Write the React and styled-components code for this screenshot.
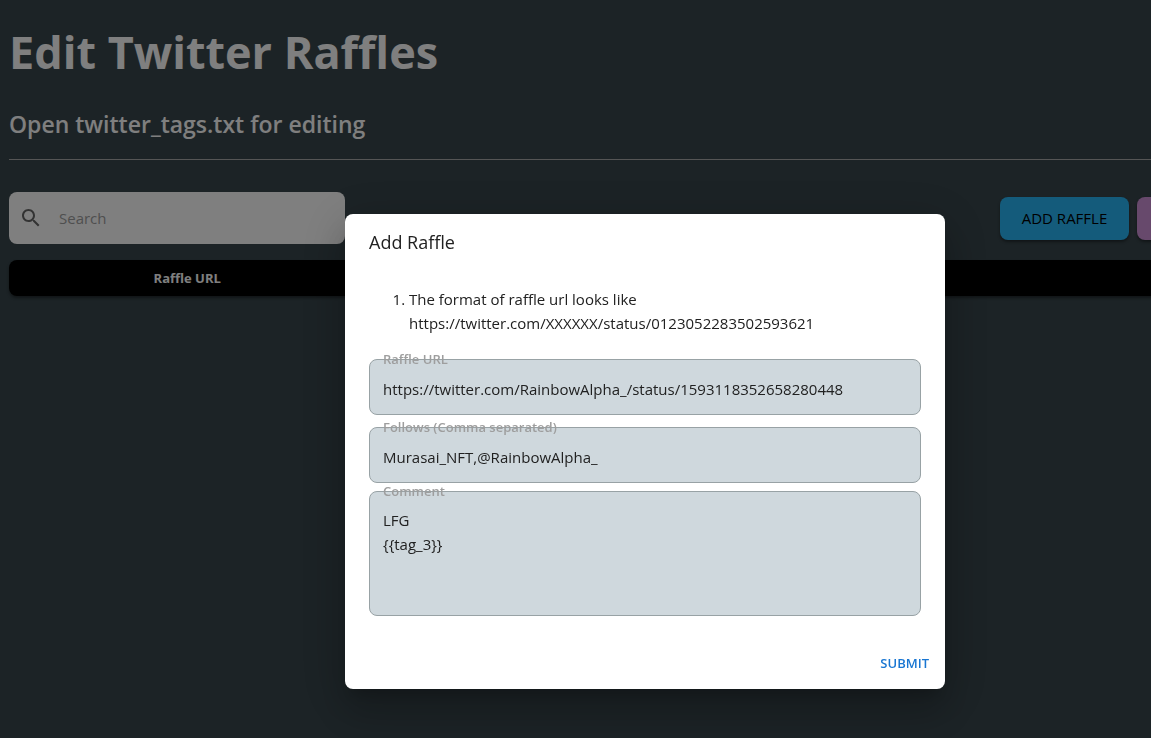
import React, { useState } from "react";
import styled, { createGlobalStyle } from "styled-components";

const GlobalStyle = createGlobalStyle`
  *, *::before, *::after { box-sizing: border-box; }
  body {
    margin: 0;
    background: #38464c;
    color: #fff;
    font-family: "Segoe UI", "Open Sans", "Noto Sans", sans-serif;
    font-size: 15px;
    line-height: 24px;
    overflow: hidden;
  }
  button, input, textarea { font: inherit; }
`;

const Page = styled.main`
  width: calc(100% + 139px);
  min-height: 100vh;
  padding: 20px 8px 0 9px;
`;

const Title = styled.h1`
  margin: 0;
  font-size: 45px;
  line-height: 64px;
  font-weight: 700;
`;

const Subtitle = styled.h2`
  margin: 24px 0 19px;
  font-size: 23px;
  line-height: 32px;
  font-weight: 600;
`;

const Divider = styled.hr`
  margin: 0 0 32px;
  border: 0;
  border-top: 1px solid #aaa;
`;

const Toolbar = styled.div`
  display: flex;
  align-items: center;
  gap: 8px;
  margin-bottom: 16px;
`;

const SearchBox = styled.label`
  display: flex;
  align-items: center;
  gap: 14px;
  width: 336px;
  height: 52px;
  margin-right: auto;
  padding: 0 10px;
  border-radius: 8px;
  background: #fff;
  color: #666;
`;

const SearchInput = styled.input`
  flex: 1;
  min-width: 0;
  border: 0;
  outline: 0;
  background: transparent;
  color: #222;
  &::placeholder { color: #9e9e9e; opacity: 1; }
`;

const ActionButton = styled.button`
  height: 43px;
  min-width: ${(p) => p.$width};
  border: 0;
  border-radius: 8px;
  background: ${(p) => p.$color};
  color: #000;
  font-size: 15px;
  box-shadow: 0 2px 3px rgba(0, 0, 0, 0.4);
`;

const RaffleTable = styled.table`
  width: 100%;
  height: 36px;
  border-spacing: 0;
  table-layout: fixed;
  border-radius: 8px;
  background: #000;
  box-shadow: 0 2px 3px rgba(0, 0, 0, 0.4);
`;

const HeadCell = styled.th`
  width: ${(p) => p.$width};
  padding: 0;
  font-size: 13px;
  font-weight: 700;
`;

const Backdrop = styled.div`
  position: fixed;
  inset: 0;
  display: flex;
  align-items: center;
  justify-content: center;
  padding: 165px 0 0 139px;
  background: rgba(0, 0, 0, 0.5);
`;

const Dialog = styled.form`
  width: 600px;
  border-radius: 8px;
  background: #fff;
  color: #212121;
  box-shadow:
    0 11px 15px -7px rgba(0, 0, 0, 0.2),
    0 24px 38px 3px rgba(0, 0, 0, 0.14),
    0 9px 46px 8px rgba(0, 0, 0, 0.12);
`;

const DialogTitle = styled.h2`
  margin: 0;
  padding: 16px 24px;
  font-size: 18px;
  line-height: 25px;
  font-weight: 500;
`;

const DialogBody = styled.div`
  display: flex;
  flex-direction: column;
  padding: 16px 24px 21px;
`;

const Hints = styled.ol`
  margin: 0 0 24px;
  padding-left: 40px;
`;

const Field = styled.label`
  position: relative;
  display: block;
  margin-bottom: ${(p) => p.$gap || "0"};
`;

const FieldLabel = styled.span`
  position: absolute;
  top: -8px;
  left: 14px;
  color: #9e9e9e;
  font-size: 13px;
  line-height: 16px;
  font-weight: 600;
`;

const TextInput = styled.input`
  display: block;
  width: 100%;
  height: 56px;
  padding: 3px 13px 0;
  border: 1px solid #98a2a5;
  border-radius: 8px;
  outline: 0;
  background: #cfd8dd;
  color: #212121;
`;

const TextArea = styled(TextInput)`
  height: 125px;
  padding: 16px 13px;
  resize: none;
`;

const DialogActions = styled.div`
  display: flex;
  justify-content: flex-end;
  padding: 8px;
`;

const SubmitButton = styled.button`
  padding: 6px 8px;
  border: 0;
  background: transparent;
  color: #1976d2;
  font-size: 13px;
  font-weight: 600;
`;

function SearchIcon() {
  return (
    <svg width="24" height="24" viewBox="0 0 24 24" fill="currentColor" aria-hidden="true">
      <path d="M15.5 14h-.79l-.28-.27C15.41 12.59 16 11.11 16 9.5 16 5.91 13.09 3 9.5 3S3 5.91 3 9.5 5.91 16 9.5 16c1.61 0 3.09-.59 4.23-1.57l.27.28v.79l5 4.99L20.49 19l-4.99-5zm-6 0C7.01 14 5 11.99 5 9.5S7.01 5 9.5 5 14 7.01 14 9.5 11.99 14 9.5 14z" />
    </svg>
  );
}

export default function App() {
  const [url, setUrl] = useState("https://twitter.com/RainbowAlpha_/status/1593118352658280448");
  const [follows, setFollows] = useState("Murasai_NFT,@RainbowAlpha_");
  const [comment, setComment] = useState("LFG\n{{tag_3}}");

  return (
    <>
      <GlobalStyle />
      <Page>
        <Title>Edit Twitter Raffles</Title>
        <Subtitle>Open twitter_tags.txt for editing</Subtitle>
        <Divider />
        <Toolbar>
          <SearchBox>
            <SearchIcon />
            <SearchInput type="text" placeholder="Search" aria-label="Search" />
          </SearchBox>
          <ActionButton type="button" $width="129px" $color="#29b6f6">ADD RAFFLE</ActionButton>
          <ActionButton type="button" $width="145px" $color="#ce93d8" aria-label="More" />
        </Toolbar>
        <RaffleTable>
          <thead>
            <tr>
              <HeadCell scope="col" $width="28%">Raffle URL</HeadCell>
              <HeadCell />
            </tr>
          </thead>
        </RaffleTable>
      </Page>
      <Backdrop>
        <Dialog role="dialog" aria-labelledby="dialog-title" onSubmit={(e) => e.preventDefault()}>
          <DialogTitle id="dialog-title">Add Raffle</DialogTitle>
          <DialogBody>
            <Hints>
              <li>
                The format of raffle url looks like
                <br />
                https://twitter.com/XXXXXX/status/0123052283502593621
              </li>
            </Hints>
            <Field $gap="12px">
              <FieldLabel>Raffle URL</FieldLabel>
              <TextInput type="text" value={url} onChange={(e) => setUrl(e.target.value)} />
            </Field>
            <Field $gap="8px">
              <FieldLabel>Follows (Comma separated)</FieldLabel>
              <TextInput type="text" value={follows} onChange={(e) => setFollows(e.target.value)} />
            </Field>
            <Field>
              <FieldLabel>Comment</FieldLabel>
              <TextArea as="textarea" value={comment} onChange={(e) => setComment(e.target.value)} />
            </Field>
          </DialogBody>
          <DialogActions>
            <SubmitButton type="submit">SUBMIT</SubmitButton>
          </DialogActions>
        </Dialog>
      </Backdrop>
    </>
  );
}
